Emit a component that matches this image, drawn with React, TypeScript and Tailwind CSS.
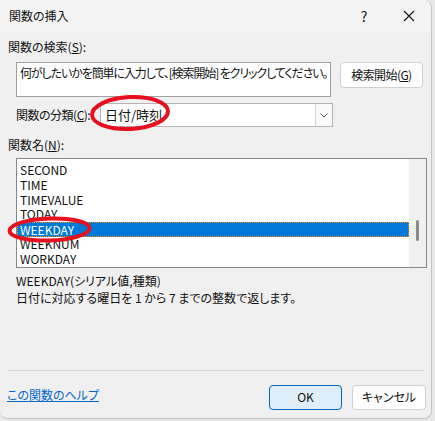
import React from "react";

const items = ["SECOND", "TIME", "TIMEVALUE", "TODAY", "WEEKDAY", "WEEKNUM", "WORKDAY"];

export default function App() {
  return (
    <div className="w-[435px] h-[421px] bg-[#e8e8e8] overflow-hidden text-[12px] leading-[16px] text-[#111] [font-family:'Noto_Sans_CJK_JP',sans-serif] [font-feature-settings:'palt']">
      <div className="relative w-[432px] h-[419px] bg-[#f0f0f0] rounded-r-[8px] rounded-bl-[8px] border-r border-b border-[#c4c4c4] flex flex-col">
        {/* title bar */}
        <div className="h-[31px] bg-[#f3f3f3] rounded-tr-[8px] flex items-center shrink-0">
          <span className="pl-[9px]">関数の挿入</span>
          <div className="ml-auto flex items-center">
            <span className="w-[46px] text-center text-[14px]">?</span>
            <span className="w-[44px] flex justify-center">
              <svg width="12" height="12" viewBox="0 0 12 12">
                <path d="M1 1 L11 11 M11 1 L1 11" stroke="#111" strokeWidth="1.1" />
              </svg>
            </span>
          </div>
        </div>

        <div className="flex flex-col px-[8px] flex-1">
          <div className="pt-[8px]">
            関数の検索(<span className="underline">S</span>):
          </div>
          <div className="flex items-start mt-[7px] pl-[8px]">
            <div className="w-[318px] h-[35px] bg-white border border-[#a0a0a0] pl-[3px] pt-[2px] whitespace-nowrap overflow-hidden tracking-[-1.1px]">
              何がしたいかを簡単に入力して、[検索開始] をクリックしてください。
            </div>
            <button className="ml-[9px] w-[84px] h-[26px] px-0 bg-white border border-[#d0d0d0] rounded-[4px] text-[12px] whitespace-nowrap tracking-[-0.6px]">
              検索開始(<span className="underline">G</span>)
            </button>
          </div>

          <div className="flex items-center mt-[6px] pl-[8px]">
            <span className="w-[84px] whitespace-nowrap tracking-[-0.5px]">
              関数の分類(<span className="underline">C</span>):
            </span>
            <div className="w-[233px] h-[24px] bg-white border border-[#b4b4b4] flex items-center">
              <span className="pl-[4px] flex-1 text-[13px]">日付/時刻</span>
              <div className="w-[17px] h-full border-l border-[#d4d4d4] bg-[#fafafa] flex items-center justify-center">
                <svg width="8" height="5" viewBox="0 0 8 5">
                  <path d="M0.5 0.5 L4 4 L7.5 0.5" fill="none" stroke="#555" strokeWidth="1" />
                </svg>
              </div>
            </div>
          </div>

          <div className="mt-[10px]">
            関数名(<span className="underline">N</span>):
          </div>

          <div className="ml-[8px] mt-[5px] w-[411px] h-[110px] bg-white border border-[#828790] flex">
            <div className="flex-1 pt-[4px]">
              {items.map((it) => (
                <div
                  key={it}
                  className={
                    it === "WEEKDAY"
                      ? "h-[14.83px] leading-[13px] pl-[2px] bg-[#0078d7] text-white border border-dotted border-[#ff8c00]"
                      : "h-[14.83px] leading-[14.83px] pl-[3px]"
                  }
                >
                  {it}
                </div>
              ))}
            </div>
            <div className="w-[17px] bg-[#f0f0f0] flex justify-center">
              <div className="w-[3px] h-[21px] mt-[61px] bg-[#8a8a8a] rounded-full" />
            </div>
          </div>

          <div className="pl-[8px] mt-[4px] leading-[17px]">
            <div>WEEKDAY(シリアル値,種類)</div>
            <div>日付に対応する曜日を 1 から 7 までの整数で返します。</div>
          </div>

          <div className="mt-auto border-t border-[#d9d9d9] mx-[-1px]" />
          <div className="flex items-center h-[47px] pt-[5px]">
            <a className="text-[#0066cc] underline -ml-[1px] -mt-[4px]">この関数のヘルプ</a>
            <button className="ml-auto w-[73px] h-[25px] bg-[#e0eef9] border border-[#0067c0] rounded-[4px] text-[12px]">
              OK
            </button>
            <button className="ml-[10px] w-[74px] h-[25px] bg-white border border-[#d0d0d0] rounded-[4px] text-[12px] mr-[-3px]">
              キャンセル
            </button>
          </div>
        </div>

        {/* red annotation ellipses */}
        <svg className="absolute left-0 top-0 pointer-events-none" width="432" height="419">
          <ellipse cx="130" cy="113" rx="38" ry="16" fill="none" stroke="#e8101e" strokeWidth="4" transform="rotate(-3 130 113)" />
          <ellipse cx="49.5" cy="229.5" rx="40" ry="11" fill="none" stroke="#e8101e" strokeWidth="4" transform="rotate(-2 49.5 229.5)" />
        </svg>
      </div>
    </div>
  );
}
